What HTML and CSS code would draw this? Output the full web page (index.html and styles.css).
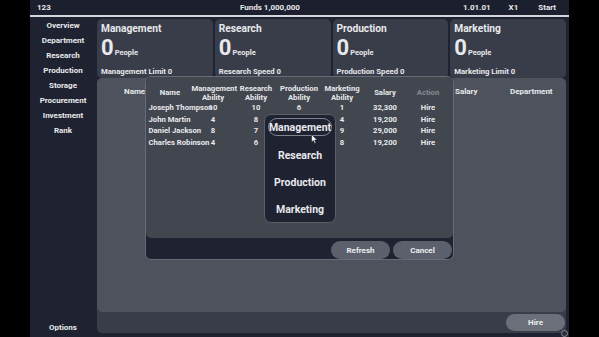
FILE: index.html
```html
<!DOCTYPE html>
<html lang="en">
<head>
    <meta charset="UTF-8">
    <meta name="viewport" content="width=device-width, initial-scale=1.0">
    <title>Company Manager</title>
    <link rel="stylesheet" href="styles.css">
</head>
<body>
    <div class="app">
        <header class="topbar">
            <span class="tb-id">123</span>
            <span class="tb-funds">Funds 1,000,000</span>
            <span class="tb-date">1.01.01</span>
            <span class="tb-speed">X1</span>
            <span class="tb-start">Start</span>
        </header>

        <div class="layout">
            <nav class="sidebar">
                <ul class="nav">
                    <li>Overview</li>
                    <li>Department</li>
                    <li>Research</li>
                    <li>Production</li>
                    <li>Storage</li>
                    <li>Procurement</li>
                    <li>Investment</li>
                    <li>Rank</li>
                </ul>
                <div class="nav-options">Options</div>
            </nav>

            <main class="main">
                <section class="cards">
                    <div class="card">
                        <div class="card-title">Management</div>
                        <div class="card-count"><span class="card-num">0</span><span class="card-unit">People</span></div>
                        <div class="card-stat">Management Limit 0</div>
                    </div>
                    <div class="card">
                        <div class="card-title">Research</div>
                        <div class="card-count"><span class="card-num">0</span><span class="card-unit">People</span></div>
                        <div class="card-stat">Research Speed 0</div>
                    </div>
                    <div class="card">
                        <div class="card-title">Production</div>
                        <div class="card-count"><span class="card-num">0</span><span class="card-unit">People</span></div>
                        <div class="card-stat">Production Speed 0</div>
                    </div>
                    <div class="card">
                        <div class="card-title">Marketing</div>
                        <div class="card-count"><span class="card-num">0</span><span class="card-unit">People</span></div>
                        <div class="card-stat">Marketing Limit 0</div>
                    </div>
                </section>

                <section class="staff">
                    <div class="staff-list">
                        <div class="staff-head">
                            <span>Name</span>
                            <span>Salary</span>
                            <span>Department</span>
                        </div>
                    </div>
                    <div class="staff-foot">
                        <button class="btn btn-hire">Hire</button>
                    </div>
                </section>
            </main>
        </div>

        <!-- hire dialog -->
        <div class="modal">
            <div class="modal-body">
                <table class="hire-table">
                    <thead>
                        <tr>
                            <th>Name</th>
                            <th>Management<br>Ability</th>
                            <th>Research<br>Ability</th>
                            <th>Production<br>Ability</th>
                            <th>Marketing<br>Ability</th>
                            <th>Salary</th>
                            <th class="muted">Action</th>
                        </tr>
                    </thead>
                    <tbody>
                        <tr>
                            <td class="name">Joseph Thompson</td>
                            <td>10</td><td>10</td><td>6</td><td>1</td>
                            <td>32,300</td><td>Hire</td>
                        </tr>
                        <tr>
                            <td class="name">John Martin</td>
                            <td>4</td><td>8</td><td></td><td>4</td>
                            <td>19,200</td><td>Hire</td>
                        </tr>
                        <tr>
                            <td class="name">Daniel Jackson</td>
                            <td>8</td><td>7</td><td></td><td>9</td>
                            <td>29,000</td><td>Hire</td>
                        </tr>
                        <tr>
                            <td class="name">Charles Robinson</td>
                            <td>4</td><td>6</td><td></td><td>8</td>
                            <td>19,200</td><td>Hire</td>
                        </tr>
                    </tbody>
                </table>

                <div class="dropdown">
                    <div class="dd-item"><span class="dd-pill">Management</span></div>
                    <div class="dd-item">Research</div>
                    <div class="dd-item">Production</div>
                    <div class="dd-item">Marketing</div>
                    <svg class="cursor" width="7" height="10" viewBox="0 0 7 10">
                        <path d="M0.6 0.5 L0.6 8.2 L2.4 6.6 L3.6 9.4 L4.9 8.8 L3.7 6.1 L6.2 6.1 Z" fill="#fff" stroke="#1a1c26" stroke-width="0.6"/>
                    </svg>
                </div>
            </div>
            <div class="modal-foot">
                <button class="btn">Refresh</button>
                <button class="btn">Cancel</button>
            </div>
        </div>

        <span class="grip"></span>
    </div>
</body>
</html>
```

FILE: styles.css
```css
body {
    margin: 0;
    background: #000;
    font-family: Roboto, 'Liberation Sans', sans-serif;
    font-weight: 700;
    color: #e8e9ec;
}

.app {
    position: relative;
    width: 539px;
    height: 337px;
    margin-left: 30px;
    background: #1f2231;
    display: flex;
    flex-direction: column;
    overflow: hidden;
}

.topbar {
    flex: none;
    height: 15px;
    display: flex;
    align-items: center;
    padding: 0 13px 0 7px;
    font-size: 8px;
    background: #1c1f2d;
    border-bottom: 2px solid #d4d6dc;
}

.tb-id {
    width: 203px;
}

.tb-funds {
    flex: 1;
}

.tb-date {
    margin-right: 18px;
}

.tb-speed {
    margin-right: 20px;
}

.layout {
    flex: 1;
    display: flex;
    min-height: 0;
}

.sidebar {
    width: 66px;
    display: flex;
    flex-direction: column;
    justify-content: space-between;
    font-size: 8px;
    text-align: center;
    padding-bottom: 2px;
}

.nav {
    list-style: none;
    margin: 0;
    padding: 1px 0 0;
}

.nav li,
.nav-options {
    line-height: 15px;
}

.main {
    flex: 1;
    display: flex;
    flex-direction: column;
    gap: 3px;
    padding: 2px 3px 4px 1px;
    min-width: 0;
}

.cards {
    display: grid;
    grid-template-columns: repeat(4, 1fr);
    gap: 2px;
    height: 56px;
}

.card {
    background: #393d4a;
    border-radius: 5px;
    padding: 3px 4px 0;
}

.card-title {
    font-size: 10.2px;
    line-height: 13px;
}

.card-count {
    line-height: 26px;
}

.card-num {
    font-size: 22px;
}

.card-unit {
    font-size: 7.5px;
    margin-left: 1px;
}

.card-stat {
    font-size: 7.7px;
    line-height: 12px;
}

.staff {
    flex: 1;
    display: flex;
    flex-direction: column;
    background: #383d49;
    border-radius: 5px;
}

.staff-list {
    flex: 1;
    background: #4e525d;
    border-radius: 5px;
    padding: 8px 0 0 27px;
}

.staff-head {
    display: grid;
    grid-template-columns: 1fr 55px 56px;
    font-size: 8px;
    line-height: 12px;
}

.staff-foot {
    height: 21px;
    display: flex;
    justify-content: flex-end;
    align-items: center;
    padding-right: 1px;
}

.btn {
    width: 59px;
    height: 18px;
    padding: 0;
    border: none;
    border-radius: 9px;
    background: #5c606c;
    color: #eceef1;
    font-family: inherit;
    font-size: 8px;
    font-weight: 700;
}

.btn-hire {
    height: 17px;
    background: #6b6f7a;
}

/* dialog */
.modal {
    position: absolute;
    left: 115px;
    top: 76px;
    width: 309px;
    height: 184px;
    box-sizing: border-box;
    border: 1px solid #676b76;
    border-radius: 6px;
    background: #1f2231;
    display: flex;
    flex-direction: column;
}

.modal-body {
    position: relative;
    flex: 1;
    background: #42464f;
    border-radius: 5px;
    padding: 6px 0 0 2.5px;
}

.hire-table {
    table-layout: fixed;
    border-collapse: collapse;
    width: 301px;
    font-size: 7.7px;
}

.hire-table th {
    width: 43px;
    padding: 0;
    line-height: 9px;
    height: 19px;
    font-weight: 700;
    text-align: center;
    vertical-align: middle;
}

.hire-table td {
    padding: 0;
    height: 11.5px;
    line-height: 11.5px;
    text-align: center;
    white-space: nowrap;
}

.hire-table td.name {
    text-align: left;
    overflow: visible;
}

.muted {
    color: #878a93;
}

.modal-foot {
    height: 21px;
    display: flex;
    justify-content: flex-end;
    align-items: flex-end;
    gap: 3px;
    padding-right: 1px;
}

.dropdown {
    position: absolute;
    left: 118px;
    top: 37px;
    width: 72px;
    height: 109px;
    box-sizing: border-box;
    border: 1px solid #5a5e69;
    border-radius: 7px;
    background: #1f2231;
}

.dd-item {
    height: 27px;
    display: flex;
    align-items: center;
    justify-content: center;
    font-size: 10.5px;
}

.dd-pill {
    width: 64px;
    height: 18px;
    box-sizing: border-box;
    margin-top: -3px;
    display: flex;
    align-items: center;
    justify-content: center;
    border: 1px solid #80848f;
    border-radius: 9px;
}

.cursor {
    position: absolute;
    left: 46px;
    top: 19px;
}

.grip {
    position: absolute;
    left: 531px;
    top: 330px;
    width: 5px;
    height: 5px;
    border: 1px solid #8a8d96;
    border-radius: 50%;
    background: #2a2d3a;
}
```
